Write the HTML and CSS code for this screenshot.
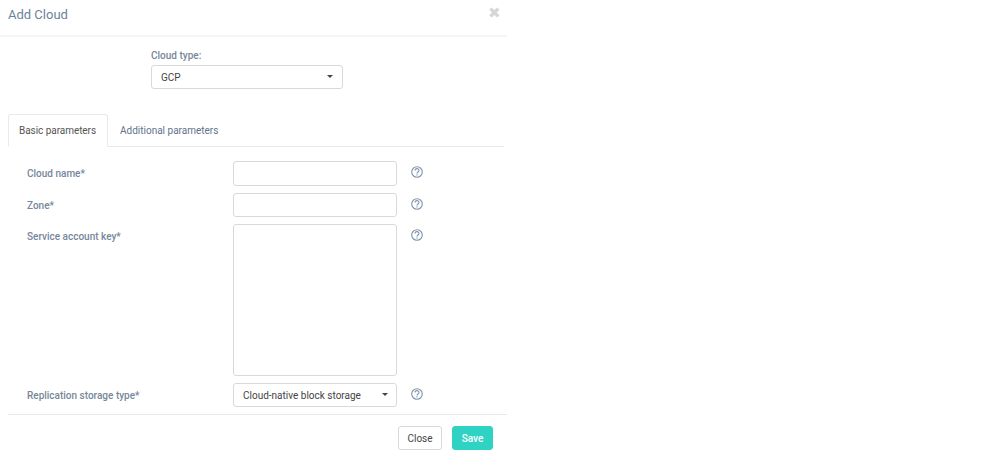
FILE: index.html
```html
<!DOCTYPE html>
<html lang="en">
<head>
  <meta charset="UTF-8">
  <title>Add Cloud</title>
  <link rel="stylesheet" href="styles.css">
</head>
<body>
  <div class="modal">
    <div class="modal-header">
      <h4>Add Cloud</h4>
      <span class="close-x">&#10006;</span>
    </div>

    <div class="cloud-type">
      <label>Cloud type:</label>
      <div class="select cloud-select">GCP<span class="caret"></span></div>
    </div>

    <div class="tabs">
      <div class="tab active">Basic parameters</div>
      <div class="tab">Additional parameters</div>
    </div>

    <div class="form">
      <div class="form-row">
        <label>Cloud name*</label>
        <div class="input"></div>
        <svg class="help" viewBox="0 0 12 12"><circle cx="6" cy="6" r="5.3"/><path d="M4 4.6c0-2.6 4-2.6 4-.1 0 1.5-2 1.5-2 3.1"/><path d="M6 8.2v1.3"/></svg>
      </div>
      <div class="form-row">
        <label>Zone*</label>
        <div class="input zone-input"></div>
        <svg class="help" viewBox="0 0 12 12"><circle cx="6" cy="6" r="5.3"/><path d="M4 4.6c0-2.6 4-2.6 4-.1 0 1.5-2 1.5-2 3.1"/><path d="M6 8.2v1.3"/></svg>
      </div>
      <div class="form-row">
        <label>Service account key*</label>
        <div class="input textarea"></div>
        <svg class="help" viewBox="0 0 12 12"><circle cx="6" cy="6" r="5.3"/><path d="M4 4.6c0-2.6 4-2.6 4-.1 0 1.5-2 1.5-2 3.1"/><path d="M6 8.2v1.3"/></svg>
      </div>
      <div class="form-row last">
        <label>Replication storage type*</label>
        <div class="select">Cloud-native block storage<span class="caret"></span></div>
        <svg class="help" viewBox="0 0 12 12"><circle cx="6" cy="6" r="5.3"/><path d="M4 4.6c0-2.6 4-2.6 4-.1 0 1.5-2 1.5-2 3.1"/><path d="M6 8.2v1.3"/></svg>
      </div>
    </div>

    <div class="modal-footer">
      <button class="btn">Close</button>
      <button class="btn btn-save">Save</button>
    </div>
  </div>
</body>
</html>
```

FILE: styles.css
```css
* {
  margin: 0;
  padding: 0;
  box-sizing: border-box;
}

body {
  font-family: Roboto, 'Liberation Sans', sans-serif;
  font-size: 10px;
  color: #444;
  background-color: #fff;
}

.modal {
  width: 507px;
}

.modal-header {
  display: flex;
  justify-content: space-between;
  height: 37px;
  padding: 6px 6px 0 8px;
  border-bottom: 2px solid #f5f5f5;
}

.modal-header h4 {
  font-size: 13px;
  font-weight: 400;
  line-height: 17px;
  color: #6d8299;
}

.close-x {
  font-size: 15px;
  line-height: 15px;
  color: #d6d6d6;
}

.cloud-type {
  padding: 13px 0 0 151px;
}

.cloud-type label {
  display: block;
  font-weight: 500;
  line-height: 12px;
  margin-bottom: 3px;
  color: #76879a;
}

.select {
  position: relative;
  width: 164px;
  height: 24px;
  padding-left: 9px;
  line-height: 23px;
  background-color: #fff;
  border: 1px solid #d9d9d9;
  border-radius: 3px;
}

.cloud-select {
  width: 192px;
}

.caret {
  position: absolute;
  top: 9px;
  right: 8px;
  border-top: 3px solid #444;
  border-left: 3px solid transparent;
  border-right: 3px solid transparent;
}

.cloud-select .caret {
  right: 9px;
}

.tabs {
  display: flex;
  height: 33px;
  margin: 25px 3px 0 8px;
  border-bottom: 1px solid #e9e9e9;
}

.tab {
  height: 33px;
  padding: 0 12px;
  line-height: 33px;
  white-space: nowrap;
  color: #5f738c;
}

.tab.active {
  width: 100px;
  color: #555;
  background-color: #fff;
  border: 1px solid #e9e9e9;
  border-bottom-color: #fff;
  border-radius: 3px 3px 0 0;
  padding: 0 10px;
  line-height: 31px;
  letter-spacing: -0.05px;
}

.form {
  padding-top: 14px;
}

.form-row {
  display: flex;
  align-items: flex-start;
  padding-left: 27px;
  margin-bottom: 7px;
}

.form-row label {
  width: 206px;
  padding-top: 7px;
  line-height: 12px;
  font-weight: 500;
  color: #76879a;
}

.form-row.last {
  margin-bottom: 0;
}

.input {
  width: 164px;
  height: 25px;
  border: 1px solid #d9d9d9;
  border-radius: 3px;
}

.input.zone-input {
  height: 24px;
}

.input.textarea {
  height: 152px;
}

.help {
  width: 12px;
  height: 12px;
  margin: 5px 0 0 14px;
  fill: none;
  stroke: #7f93aa;
  stroke-width: 1.1;
}

.modal-footer {
  display: flex;
  justify-content: flex-end;
  gap: 10px;
  margin: 7px 0 0 8px;
  padding: 11px 14px 0 0;
  border-top: 1px solid #e9e9e9;
}

.btn {
  width: 44px;
  height: 24px;
  font-family: inherit;
  font-size: 10px;
  color: #444;
  background-color: #fff;
  border: 1px solid #d9d9d9;
  border-radius: 3px;
}

.btn-save {
  width: 41px;
  font-weight: 500;
  color: #fff;
  background-color: #2fd3c4;
  border-color: #2fd3c4;
}
```
